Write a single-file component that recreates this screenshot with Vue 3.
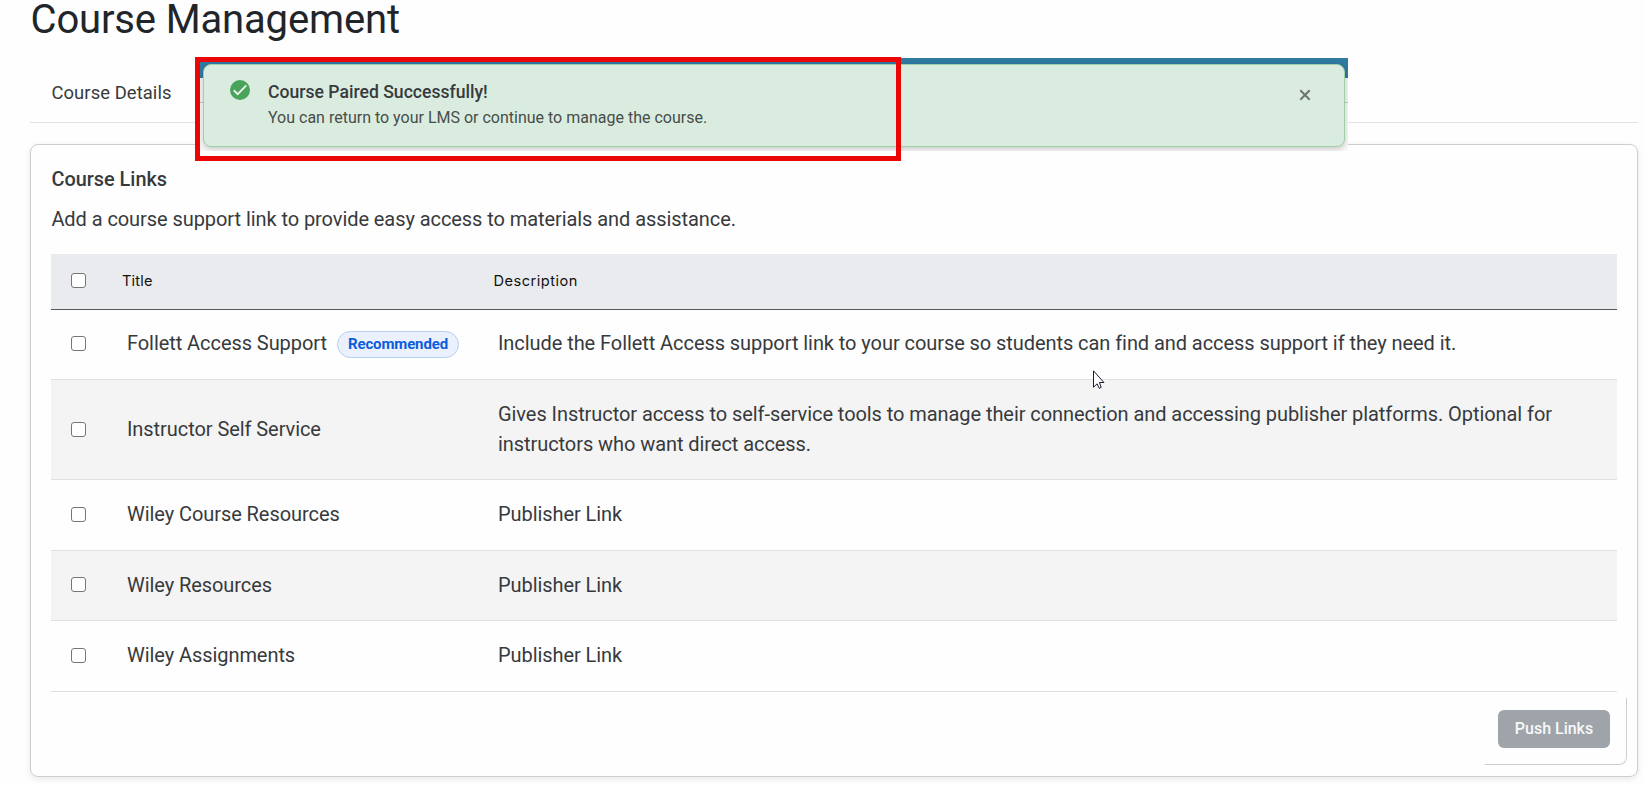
<script setup>
const rows = [
  { title: 'Follett Access Support', badge: 'Recommended', text: 'Include the Follett Access support link to your course so students can find and access support if they need it.', size: 'h70 first' },
  { title: 'Instructor Self Service', text: 'Gives Instructor access to self-service tools to manage their connection and accessing publisher platforms. Optional for instructors who want direct access.', size: 'h100' },
  { title: 'Wiley Course Resources', text: 'Publisher Link', size: 'h71' },
  { title: 'Wiley Resources', text: 'Publisher Link', size: 'h70' },
  { title: 'Wiley Assignments', text: 'Publisher Link', size: 'h71' },
]
</script>

<template>
  <main class="page">
    <h1>Course Management</h1>
    <nav class="tabs"><span class="tab">Course Details</span></nav>

    <section class="card">
      <h2>Course Links</h2>
      <p class="intro">Add a course support link to provide easy access to materials and assistance.</p>
      <div class="table">
        <div class="row head">
          <span class="check"></span>
          <span class="th">Title</span>
          <span class="th wide">Description</span>
        </div>
        <div v-for="row in rows" :key="row.title" class="row" :class="row.size">
          <span class="check"></span>
          <span class="name"><span class="label">{{ row.title }}</span><span v-if="row.badge" class="badge">{{ row.badge }}</span></span>
          <span class="desc">{{ row.text }}</span>
        </div>
      </div>
      <footer class="footer">
        <div class="action"><button type="button">Push Links</button></div>
      </footer>
    </section>

    <div class="overlay">
      <div class="toast">
        <svg class="ok" viewBox="0 0 20 20"><circle cx="10" cy="10" r="10" fill="#4aa35a" /><path d="M3.8 10.3 7.7 14.1 16.3 5.4" fill="none" stroke="#eaf5ec" stroke-width="1.9" /></svg>
        <div class="message">
          <strong>Course Paired Successfully!</strong>
          <span>You can return to your LMS or continue to manage the course.</span>
        </div>
        <svg class="close" viewBox="0 0 12 12"><path d="M1.3 1.3 10.7 10.7M10.7 1.3 1.3 10.7" stroke="#6f7670" stroke-width="2.1" /></svg>
      </div>
    </div>
    <div class="highlight"></div>
    <svg class="cursor" viewBox="0 0 13 20"><path d="M.5 .8V17.2L4.1 13.8 6.2 18.3 8.2 17.4 6.4 12.5H10.9Z" fill="#fff" stroke="#1c1c2c" stroke-width="1" /></svg>
  </main>
</template>

<style>
body { margin: 0; background: #fff; }
</style>

<style scoped>
* { box-sizing: border-box; }
.page { position: relative; width: 1645px; height: 786px; padding: 0 7px 0 30px; overflow: hidden; background: #fefefe; color: #373a3d; font-family: Roboto, "Liberation Sans", sans-serif; }
h1 { height: 39px; margin: 0; font-size: 40px; font-weight: 400; line-height: 40px; letter-spacing: -.15px; text-indent: .5px; color: #212529; }
.tabs { height: 84px; padding: 42px 22px 0 21.5px; border-bottom: 1px solid #e2e2e2; }
.tab { display: block; font-size: 18.4px; letter-spacing: .08px; line-height: 24px; }
.card { width: 1608px; height: 633px; margin-top: 21px; padding: 23px 20px 0 20px; border: 1px solid #cecece; border-radius: 8px; box-shadow: 0 2px 6px rgba(0,0,0,.09); }
h2 { margin: 0 0 0 .4px; font-size: 19.9px; font-weight: 500; line-height: 24px; }
.intro { margin: 14px 0 0 .4px; font-size: 20px; letter-spacing: -.07px; line-height: 26px; }
.table { margin-top: 22px; }
.row { display: grid; grid-template-columns: 76px 371px 1fr; align-items: center; padding-bottom: 2px; border-bottom: 1px solid #dee0e4; }
.row:nth-child(odd):not(.head) { background: #f4f4f4; }
.head { height: 56px; background: #eaebef; border-bottom-color: #55585c; grid-template-columns: 71px 371px 1fr; }
.h70 { height: 70px; } .h71 { height: 71px; } .h100 { height: 100px; }
.check { width: 15px; height: 15px; margin-left: 20px; background: #fff; border: 1px solid #767676; border-radius: 3px; }
.h100 .check { margin-top: 2px; }
.th { font-family: Inter, sans-serif; font-size: 14.6px; letter-spacing: .2px; color: #111; }
.th.wide { margin-left: .5px; letter-spacing: .48px; }
.name { display: flex; align-items: center; font-size: 20px; letter-spacing: -.067px; }
.desc { font-size: 20px; letter-spacing: -.067px; line-height: 30px; padding-right: 40px; }
.first .label, .first .desc { margin-bottom: 2px; }
.badge { height: 27px; margin: 2px 0 0 10px; padding: 0 10px; border: 1px solid #b5cff3; border-radius: 14px; background: #eaf1fc; color: #0d5cdb; font-size: 15px; font-weight: 700; letter-spacing: -.13px; line-height: 25px; }
.footer { display: flex; justify-content: flex-end; padding-top: 6px; margin-right: -10px; }
.action { width: 142px; height: 67px; padding: 12px 0 0 13px; border: solid #cecece; border-width: 0 1px 1px 0; border-bottom-right-radius: 8px; }
button { width: 112px; height: 38px; padding: 0; border: 0; border-radius: 6px; background: #9fa4aa; color: #f7f8f8; font: 500 16px/38px Roboto, sans-serif; }
.overlay { position: absolute; left: 200px; top: 58px; width: 1148px; height: 93px; padding: 6px 3px 0; overflow: hidden; background: linear-gradient(#2f7ba1 20px, #f6f6f6 20px, #f6f6f6 44px, #c6c6c6 44px, #c6c6c6 45px, #f9f9f9 45px); }
.toast { display: flex; height: 83px; padding: 15px 33px 0 26px; border: 1px solid #9fd0a8; border-radius: 8px; background: #daecdf; box-shadow: 0 2px 6px rgba(0,0,0,.2); }
.ok { width: 20px; height: 20px; }
.message { display: flex; flex-direction: column; flex: 1; margin-left: 18px; }
.message strong { font-size: 17.6px; font-weight: 500; line-height: 24px; }
.message span { margin-top: 2px; font-size: 16px; line-height: 24px; color: #484d4a; }
.close { width: 12px; height: 12px; margin-top: 8.5px; }
.highlight { position: absolute; left: 195px; top: 57px; width: 706px; height: 104px; border: 5px solid #eb0606; }
.cursor { position: absolute; left: 1093px; top: 370px; width: 13px; height: 20px; }
</style>
